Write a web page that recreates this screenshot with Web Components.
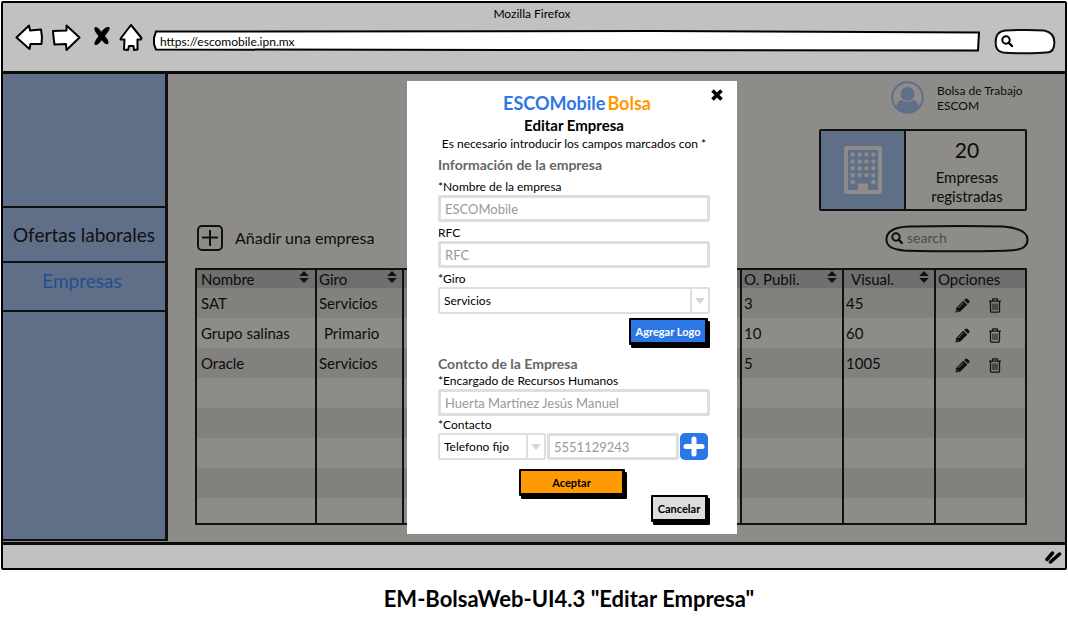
<!DOCTYPE html>
<html lang="es">
<head>
<meta charset="utf-8">
<meta name="viewport" content="width=device-width, initial-scale=1">
<title>EM-BolsaWeb-UI4.3 "Editar Empresa"</title>
<style>
  body { margin: 0; background: #fff; color: #0c0c0c; font-family: Lato, Carlito, Calibri, sans-serif; }
</style>
</head>
<body>
<wireframe-page></wireframe-page>

<script>
const define = (name, html, setup) => {
  const template = document.createElement('template');
  template.innerHTML = html;
  customElements.define(name, class extends HTMLElement {
    connectedCallback() {
      if (this.shadowRoot) return;
      const root = this.attachShadow({ mode: 'open' });
      root.append(template.content.cloneNode(true));
      if (setup) setup(this, root);
    }
  });
};

const magnifier = `<svg viewBox="0 0 12 12" width="12" height="12" fill="none" stroke="currentColor" aria-hidden="true">
  <circle cx="5" cy="5" r="3.7" stroke-width="2"/><path d="M7.8 7.8 11 11" stroke-width="2.4" stroke-linecap="round"/></svg>`;

/* Rounded hand-drawn search box, used in the browser bar and in the page */
define('search-pill', `
<style>
  :host { display: block; }
  label { position: relative; display: flex; align-items: center; gap: 4px; height: var(--pill-height, 26px); padding: 0 8px 0 6px; box-sizing: border-box; }
  .outline { position: absolute; inset: 0; width: 100%; height: 100%; overflow: visible; }
  .outline path { fill: var(--pill-fill, none); stroke: #0c0c0c; stroke-width: 2; vector-effect: non-scaling-stroke; }
  label svg:not(.outline), input { position: relative; flex: none; }
  input { flex: 1; min-width: 0; border: 0; padding: 0; background: none; outline: 0; color: #4b4a49; font: 14px/18px Lato, sans-serif; }
  input::placeholder { color: #4b4a49; opacity: 1; }
</style>
<label>
  <svg class="outline" viewBox="0 0 100 26" preserveAspectRatio="none" aria-hidden="true"><path d="M1 14C1 6 7 2 17 1.500C35 1 70 1 82 1.500C94 3 99 8 99 14C99 22 94 24.500 86 24.500C70 25.500 30 25.500 13 24.500C4 23.500 1 20 1 14Z"/></svg>
  ${magnifier}
  <input type="search" aria-label="Buscar">
</label>`, (host, root) => {
  root.querySelector('input').placeholder = host.getAttribute('placeholder') || '';
});

/* Title, navigation buttons and address line of the browser */
define('browser-bar', `
<style>
  :host { display: block; background: #c1c1c1; color: #000; padding: 3px 10px 0 12px; height: 68px; box-sizing: border-box; }
  .title { text-align: center; font-size: 12px; line-height: 16px; margin-right: 6px; }
  nav { display: flex; align-items: center; height: 38px; }
  button { border: 0; background: none; padding: 0; height: 28px; flex: none; margin-bottom: 6px; }
  button svg { display: block; fill: #fff; stroke: #000; stroke-width: 2; stroke-linejoin: round; }
  .forward { margin-left: 8px; } .stop { margin-left: 12px; } .home { margin-left: 8px; }
  .url { position: relative; flex: 1; height: 22px; margin: 0 15px 0 10px; }
  .url svg { position: absolute; inset: 0; width: 100%; height: 100%; }
  .url path { fill: #fff; stroke: #000; stroke-width: 2; vector-effect: non-scaling-stroke; }
  .url input { position: relative; width: 100%; height: 22px; box-sizing: border-box; padding: 0 7px; border: 0; background: none; outline: 0; color: #000; font: 12px/16px Lato, sans-serif; }
  search-pill { width: 60px; --pill-fill: #fff; --pill-height: 25px; }
</style>
<div class="title">Mozilla Firefox</div>
<nav aria-label="Navegador">
  <button type="button" aria-label="Atrás"><svg width="28" height="28" viewBox="0 0 28 28"><path d="M1.500 13.500 14 1.500 15 6.500 26 5.500 27 13 26.500 20 15.500 20 14.500 25Z"/></svg></button>
  <button type="button" class="forward" aria-label="Adelante"><svg width="30" height="28" viewBox="0 0 30 28"><path d="M2 7 15.500 6.500 15.500 1.500 28.500 13.500 15.500 26 15 20 3.500 20.500 2.500 13Z"/></svg></button>
  <button type="button" class="stop" aria-label="Detener"><svg width="18" height="28" viewBox="0 0 18 28"><path d="M2 3.500C4 3 6 5 8.500 8.500 10 5.500 13 3 16 3.500 17 6 13.500 9 11.500 12 13.500 14.500 15.500 17 15 19.500 12.500 20.500 10.500 18 8.500 15.500 7 18.500 4.500 21 2 20.500 1 18.500 4 15 6 12 3.500 9 1 6 2 3.500Z" style="fill:#000;stroke-width:1"/></svg></button>
  <button type="button" class="home" aria-label="Inicio"><svg width="24" height="28" viewBox="0 0 24 28"><path d="M12 1 22.500 14 22 15.500 18.500 15.500 18.500 25.500 15 26 14.500 22 10 22 9 26 5 25.500 5.500 15.500 1.500 15.500 2 14Z"/></svg></button>
  <div class="url">
    <svg viewBox="0 0 826 22" preserveAspectRatio="none" aria-hidden="true"><path d="M3 1.500 500 1 825 2.500 824 20.500 400 20 3 19.500 1 14 1 8Z"/></svg>
    <input type="text" aria-label="Dirección" value="https://escomobile.ipn.mx">
  </div>
  <search-pill></search-pill>
</nav>`);

define('side-nav', `
<style>
  :host { display: flex; flex-direction: column; background: #5f6f87; border-right: 3px solid #111; border-bottom: 2px solid #111; margin-bottom: 1px; padding-top: 132px; box-sizing: border-box; }
  nav { border-top: 2px solid #111; }
</style>
<nav aria-label="Secciones"><slot></slot></nav>`);

define('nav-link', `
<style>
  :host { display: block; }
  a { display: block; height: 53px; line-height: 54px; border-bottom: 2px solid #111; text-align: center; color: #111; text-decoration: none; font-size: 19px; white-space: nowrap; }
  :host([current]) a { height: 47px; line-height: 36px; padding-right: 4px; color: #244d8f; }
</style>
<a href="#"><slot></slot></a>`, (host, root) => {
  if (host.hasAttribute('current')) root.querySelector('a').setAttribute('aria-current', 'page');
});

define('user-badge', `
<style>
  :host { display: flex; align-items: center; gap: 13px; width: 136px; font-size: 12px; line-height: 15px; white-space: nowrap; }
  svg { flex: none; }
  p { margin: 0; }
</style>
<svg width="33" height="33" viewBox="0 0 33 33" aria-hidden="true">
  <defs><clipPath id="disc"><circle cx="16.500" cy="16.500" r="15"/></clipPath></defs>
  <circle cx="16.500" cy="16.500" r="15.300" fill="none" stroke="#5f6f87" stroke-width="2"/>
  <circle cx="16.500" cy="13" r="7" fill="#5f6f87"/>
  <path clip-path="url(#disc)" d="M5 29C5 23 7 19.500 11 19 14 21.800 19 21.800 22 19 26 19.500 28 23 28 29L22 33H11Z" fill="#5f6f87"/>
</svg>
<p><slot></slot></p>`);

define('stat-card', `
<style>
  :host { display: grid; grid-template-columns: 85px 1fr; width: 208px; height: 82px; box-sizing: border-box; border: 2px solid #111; border-radius: 2px; }
  .icon { display: grid; place-items: center; background: #5f6f87; border-right: 2px solid #111; }
  .text { text-align: center; font-size: 15px; line-height: 19px; padding: 5px 0 0 3px; }
  strong { display: block; font-size: 21px; line-height: 28px; font-weight: 400; margin-bottom: 4px; }
  p { margin: 0; }
</style>
<div class="icon">
  <svg width="38" height="48" viewBox="0 0 38 48" aria-hidden="true">
    <rect x="2" y="2" width="34" height="44" rx="0.500" fill="none" stroke="#8d8c89" stroke-width="4"/>
    <g fill="#8d8c89" id="windows"></g>
    <path d="M14 46V37.500H24V46Z" fill="#8d8c89"/>
  </svg>
</div>
<div class="text"><strong><slot name="value"></slot></strong><p><slot></slot></p></div>`, (host, root) => {
  let dots = '';
  for (let r = 0; r < 5; r++) for (let c = 0; c < 4; c++) {
    if (r === 4 && (c === 1 || c === 2)) continue;
    dots += `<rect x="${6.7 + c * 6.9}" y="${6.5 + r * 6.9}" width="4" height="4" rx="1.200"/>`;
  }
  root.querySelector('#windows').innerHTML = dots;
});

define('add-company', `
<style>
  :host { display: block; }
  button { display: flex; align-items: center; gap: 12px; border: 0; padding: 0; margin-left: 2px; background: none; color: inherit; font: 16px/20px Lato, sans-serif; }
</style>
<button type="button">
  <svg width="26" height="26" viewBox="0 0 26 26" fill="none" stroke="#111" stroke-width="2" aria-hidden="true"><rect x="1" y="1" width="24" height="24" rx="4"/><path d="M5 12.500H21M13 5V21"/></svg>
  <slot></slot>
</button>`);

/* Company list with sortable headings */
define('company-table', `
<style>
  :host { display: block; border: 2px solid #111; box-sizing: border-box; }
  table { width: 100%; border-collapse: collapse; table-layout: fixed; font-size: 15px; line-height: 18px; }
  th, td { padding: 0 4px; text-align: left; font-weight: 400; white-space: nowrap; overflow: hidden; }
  th + th, td + td { border-left: 2px solid #111; padding-left: 2px; padding-right: 3px; }
  thead tr { height: 18px; background: #706f6d; }
  tbody tr { height: 30px; }
  tbody tr:nth-child(odd) { background: #82817e; }
  tbody tr:last-child { height: 25px; }
  .c1 { width: 119px; } .c2 { width: 87px; } .c4 { width: 102px; } .c5 { width: 92px; } .c6 { width: 90px; }
  .head { display: flex; justify-content: space-between; align-items: center; }
  .indent { padding-left: 5px; }
  button { border: 0; background: none; padding: 0; height: 18px; margin: 0; color: inherit; }
  .head button { height: 14px; margin: -2px 2px 2px 0; }
  svg { display: block; }
  .tools { display: flex; gap: 18px; padding: 4px 0 0 17px; }
</style>
<table>
  <colgroup><col class="c1"><col class="c2"><col><col class="c4"><col class="c5"><col class="c6"></colgroup>
  <thead><tr></tr></thead>
  <tbody></tbody>
</table>`, (host, root) => {
  const sort = `<button type="button" aria-label="Ordenar"><svg width="10" height="14" viewBox="0 0 10 14" fill="#111"><path d="M5 1 9.800 6H.2ZM5 13 9.800 8H.2Z"/></svg></button>`;
  const tools = `<div class="tools">
    <button type="button" aria-label="Editar"><svg width="15" height="15" viewBox="0 0 15 15"><path fill="#111" d="M.5 14.500 1.200 10 8.300 2.700 12.300 6.700 5 13.800ZM9.200 1.900 10.600 .7Q11.500 0 12.500 .9L14.200 2.500Q15 3.500 14.200 4.400L13 5.800Z"/><path d="M3.200 10 8.300 4.900M1.500 12 3 13.500" stroke="#82817e" stroke-width=".8"/></svg></button>
    <button type="button" aria-label="Eliminar"><svg width="14" height="15" viewBox="0 0 14 15" fill="none" stroke="#111" stroke-width="1.300"><path d="M1 3.200H13M4.500 3V1.500Q4.500 .8 5.200 .8H8.800Q9.500 .8 9.500 1.500V3M2.500 3.500V13Q2.500 14.200 3.700 14.200H10.300Q11.500 14.200 11.500 13V3.500"/><path d="M5 5.500V12M7 5.500V12M9 5.500V12" stroke-width="1"/></svg></button></div>`;
  const heads = ['Nombre', 'Giro', null, 'O. Publi.', 'Visual.', 'Opciones'];
  root.querySelector('thead tr').innerHTML = heads.map((h, i) => h
    ? `<th scope="col"><div class="head"><span${i === 4 ? ' class="indent"' : ''}>${h}</span>${i < 5 ? sort : ''}</div></th>` : '<th></th>').join('');
  const rows = [['SAT', 'Servicios', '3', '45'], ['Grupo salinas', 'Primario', '10', '60'], ['Oracle', 'Servicios', '5', '1005'], [], [], [], [], []];
  root.querySelector('tbody').innerHTML = rows.map(r => r.length
    ? `<tr><td>${r[0]}</td><td><span${r[1] === 'Primario' ? ' class="indent"' : ''}>${r[1]}</span></td><td></td><td>${r[2]}</td><td>${r[3]}</td><td>${tools}</td></tr>`
    : '<tr><td></td><td></td><td></td><td></td><td></td><td></td></tr>').join('');
});

define('text-field', `
<style>
  :host { display: block; }
  label { display: block; font-size: 12px; line-height: 16px; color: #000; }
  label:empty { display: none; }
  input { display: block; width: 100%; height: 27px; box-sizing: border-box; border: 3px solid #dedede; border-radius: 2px; background: #fff; padding: 0 4px; color: #999; font: 13px/18px Lato, sans-serif; outline: 0; }
  input::placeholder { color: #999; opacity: 1; }
</style>
<label for="control"></label><input id="control" type="text">`, (host, root) => {
  const input = root.querySelector('input');
  root.querySelector('label').textContent = host.getAttribute('label') || '';
  if (!host.hasAttribute('label')) input.setAttribute('aria-label', host.getAttribute('name'));
  input.value = host.getAttribute('value') || '';
  input.placeholder = host.getAttribute('placeholder') || '';
});

define('select-field', `
<style>
  :host { display: block; }
  label { display: block; font-size: 12px; line-height: 16px; color: #000; }
  label:empty { display: none; }
  .box { display: grid; grid-template-columns: 1fr 18px; height: 27px; box-sizing: border-box; border: 2px solid #dedede; border-radius: 2px; }
  select { appearance: none; grid-area: 1 / 1 / 2 / 3; border: 0; background: none; outline: 0; padding: 0 4px; color: #000; font: 12px/16px Lato, sans-serif; }
  .arrow { grid-area: 1 / 2; display: grid; place-items: center; border-left: 2px solid #dedede; pointer-events: none; }
</style>
<label for="control"></label>
<div class="box"><select id="control"><option></option></select>
<span class="arrow"><svg width="10" height="6" viewBox="0 0 10 6" fill="#d4d4d4" aria-hidden="true"><path d="M0 0H10L5 6Z"/></svg></span></div>`, (host, root) => {
  root.querySelector('label').textContent = host.getAttribute('label') || '';
  if (!host.hasAttribute('label')) root.querySelector('select').setAttribute('aria-label', host.getAttribute('name'));
  root.querySelector('option').textContent = host.getAttribute('value');
});

define('block-button', `
<style>
  :host { display: block; padding: 0 2px 3px 0; box-sizing: border-box; }
  button { display: block; width: 100%; height: 27px; box-sizing: border-box; border: 2px solid #000; border-bottom-width: 3px; border-right-width: 3px; border-radius: 1px; padding: 2px 0 0; box-shadow: 2px 3px #000; background: var(--face, #ddd); color: var(--ink, #000); font: 700 11px/16px Lato, sans-serif; white-space: nowrap; }
</style>
<button type="button"><slot></slot></button>`);

define('edit-dialog', `
<style>
  :host { display: block; position: relative; width: 330px; box-sizing: border-box; padding: 10px 27px 9px 31px; background: #fff; color: #000; }
  h1, h2, h3, p { margin: 0; text-align: center; }
  h1 { font-size: 18px; line-height: 24px; color: #2c77e6; padding-left: 6px; }
  h1 span { color: #ff9a00; margin-left: 2px; }
  h2 { font-size: 15px; line-height: 20px; }
  p { font-size: 12px; line-height: 18px; white-space: nowrap; }
  h3 { text-align: left; font-size: 14px; line-height: 18px; color: #666; margin: 3px 0 5px; }
  h3.second { margin: 7px 0 0; }
  .close { position: absolute; top: 7px; right: 13px; border: 0; padding: 0; background: none; }
  .close svg, .add svg { display: block; }
  .fields { display: grid; gap: 3px; }
  .contact { display: grid; grid-template-columns: 108px 132px 28px; align-items: end; gap: 1px; margin-top: 1px; }
  .contact select-field { min-width: 0; }
  .add { border: 0; padding: 0; background: none; }
  .logo { width: 81px; margin: 4px 0 0 auto; --face: #2c77e6; --ink: #fff; }
  .accept { width: 108px; margin: 9px 0 0 81px; --face: #ff9a00; }
  .cancel { width: 59px; margin: -4px 0 0 auto; }
</style>
<button type="button" class="close" aria-label="Cerrar"><svg width="14" height="14" viewBox="0 0 14 14" aria-hidden="true"><path d="M2.500 2.500 11.500 11.500M11.500 2.500 2.500 11.500" stroke="#000" stroke-width="3.600"/></svg></button>
<h1>ESCOMobile<span>Bolsa</span></h1>
<h2>Editar Empresa</h2>
<p>Es necesario introducir los campos marcados con *</p>
<h3>Información de la empresa</h3>
<div class="fields">
  <text-field label="*Nombre de la empresa" value="ESCOMobile"></text-field>
  <text-field label="RFC" placeholder="RFC"></text-field>
  <select-field label="*Giro" value="Servicios"></select-field>
</div>
<block-button class="logo">Agregar Logo</block-button>
<h3 class="second">Contcto de la Empresa</h3>
<text-field label="*Encargado de Recursos Humanos" value="Huerta Martínez Jesús Manuel"></text-field>
<div class="contact">
  <select-field label="*Contacto" value="Telefono fijo"></select-field>
  <text-field name="Número" value="5551129243"></text-field>
  <button type="button" class="add" aria-label="Añadir contacto"><svg width="28" height="27" viewBox="0 0 28 27"><rect width="28" height="27" rx="5" fill="#2c77e6"/><path d="M14 6V21M6 13.500H22" stroke="#fff" stroke-width="5" stroke-linecap="round"/></svg></button>
</div>
<block-button class="accept">Aceptar</block-button>
<block-button class="cancel">Cancelar</block-button>`);

define('browser-window', `
<style>
  :host { display: block; margin: 1px 1px 0; border: 2px solid #000; background: #c1c1c1; border-radius: 2px; }
  .page { position: relative; display: grid; grid-template-columns: 165px 1fr; border-top: 3px solid #0a0a0a; border-bottom: 3px solid #0a0a0a; background: #8d8c89; }
  .overlay { position: absolute; inset: 0; display: flex; justify-content: center; align-items: flex-start; padding: 7px 0 0 76px; }
  .status { height: 23px; display: flex; justify-content: flex-end; align-items: center; padding-right: 3px; }
</style>
<browser-bar></browser-bar>
<div class="page"><slot name="side"></slot><slot></slot><div class="overlay"><slot name="dialog"></slot></div></div>
<div class="status"><svg width="18" height="14" viewBox="0 0 18 14" stroke="#000" stroke-width="3.500" stroke-linecap="round" aria-hidden="true"><path d="M3 9.500 8.500 3M6.500 12 15.500 4"/></svg></div>`);

define('company-page', `
<style>
  :host { display: block; padding: 7px 38px 17px 27px; min-width: 0; }
  main { display: flex; flex-direction: column; }
  user-badge { align-self: flex-end; }
  stat-card { align-self: flex-end; margin-top: 15px; }
  .bar { display: flex; justify-content: space-between; align-items: center; height: 28px; margin: 13px 0 16px; }
  search-pill { width: 144px; --pill-height: 27px; margin-right: -2px; }
</style>
<main>
  <user-badge>Bolsa de Trabajo<br>ESCOM</user-badge>
  <stat-card><span slot="value">20</span>Empresas<br>registradas</stat-card>
  <div class="bar"><add-company>Añadir una empresa</add-company><search-pill placeholder="search"></search-pill></div>
  <company-table></company-table>
</main>`);

define('wireframe-page', `
<style>
  :host { display: block; }
  figure { margin: 0; }
  figcaption { text-align: center; font-size: 22px; line-height: 28px; font-weight: 700; color: #000; padding: 15px 0 0 70px; }
</style>
<figure>
  <browser-window>
    <side-nav slot="side"><nav-link>Ofertas laborales</nav-link><nav-link current>Empresas</nav-link></side-nav>
    <company-page></company-page>
    <edit-dialog slot="dialog"></edit-dialog>
  </browser-window>
  <figcaption>EM-BolsaWeb-UI4.3 "Editar Empresa"</figcaption>
</figure>`);
</script>
</body>
</html>
